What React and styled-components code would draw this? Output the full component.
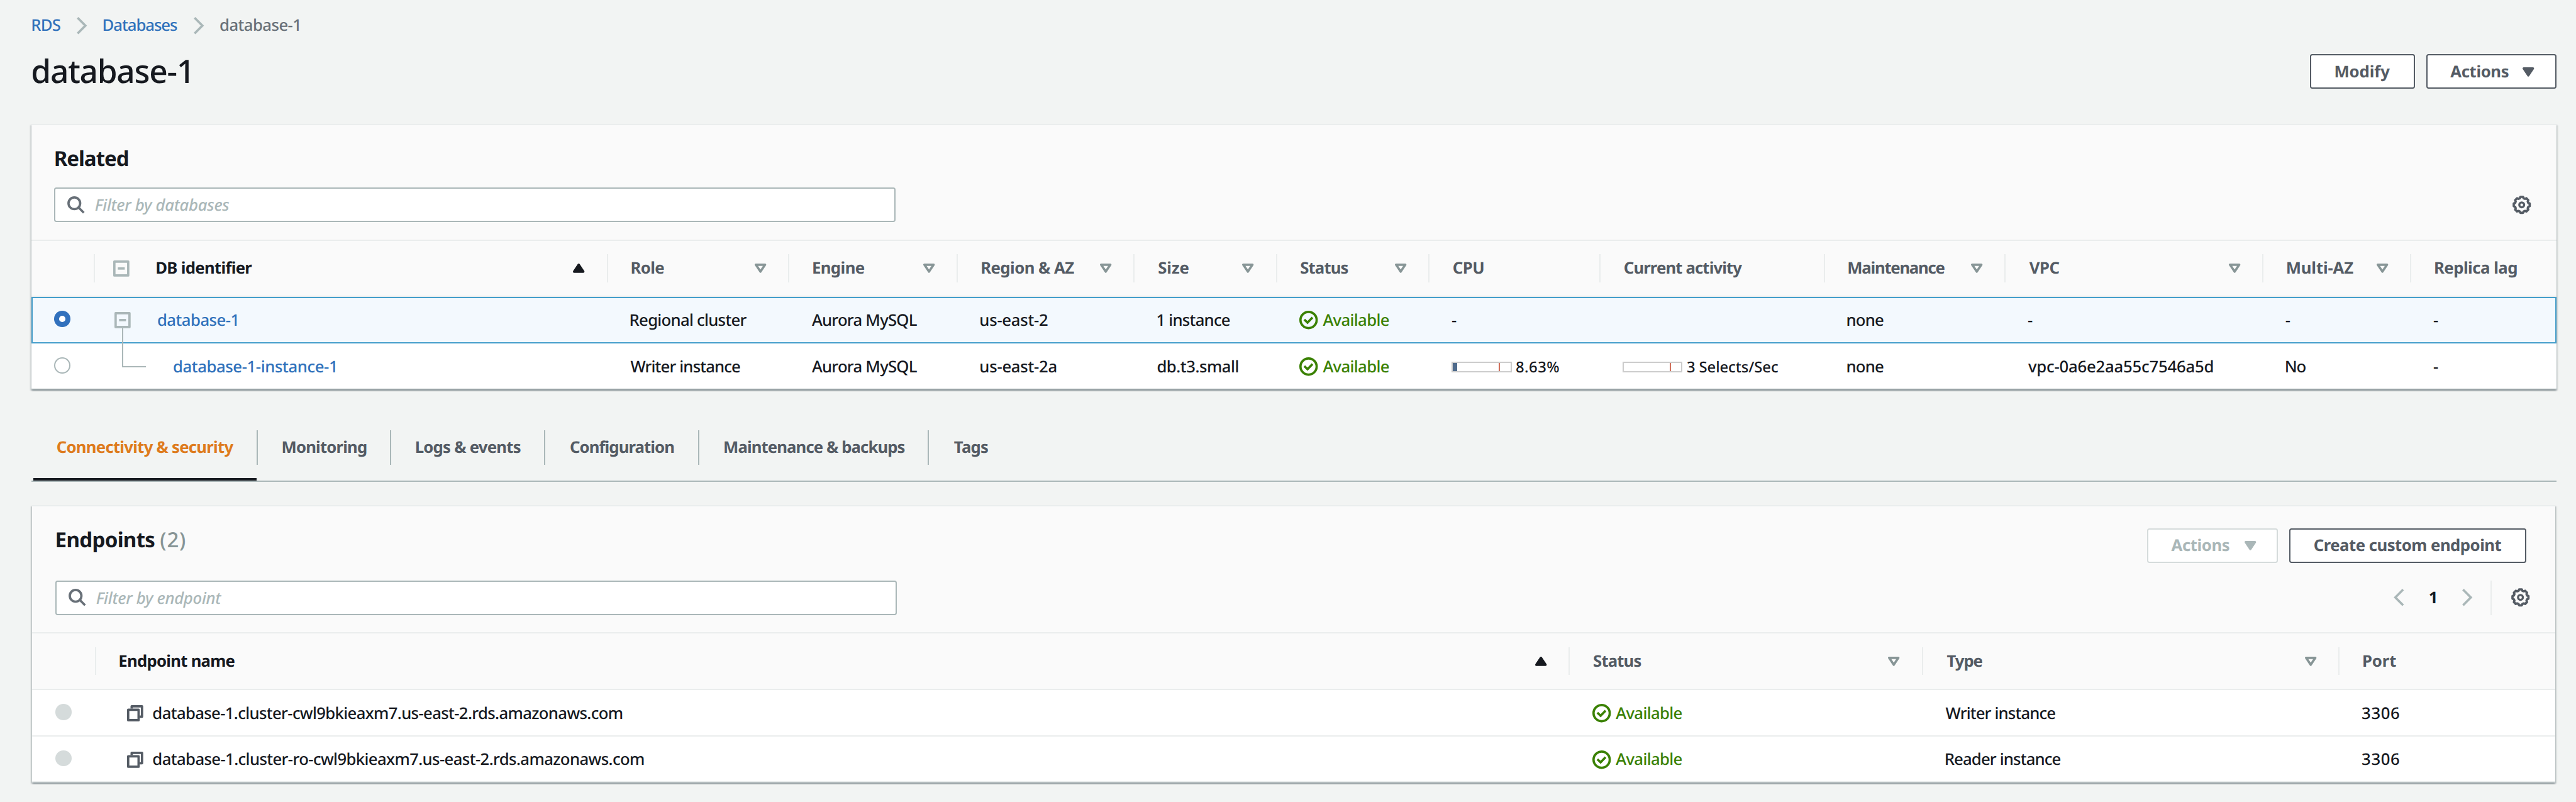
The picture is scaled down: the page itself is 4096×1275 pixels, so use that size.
import React from "react";
import styled, { createGlobalStyle, css } from "styled-components";

/* Design units are converted to CSS pixels by one scale factor. */
const SCALE = 4096 / 4458;
const s = (n) => `${(n * SCALE).toFixed(3)}px`;

const FAMILY = '"Noto Sans", "Open Sans", sans-serif';

const color = {
  page: "#f2f4f3",
  card: "#fafafa",
  line: "#eaeded",
  ink: "#16191f",
  head: "#545b64",
  muted: "#687078",
  grey: "#aab7b8",
  sort: "#879596",
  disabled: "#d5dbdb",
  link: "#2f71bb",
  green: "#3a8102",
  orange: "#de7b1c",
  selected: "#449ecb",
  selectedBg: "#f3f9fe",
};

const GlobalStyle = createGlobalStyle`
  * { box-sizing: border-box; }
  html, body { margin: 0; padding: 0; background: ${color.page}; }
  body {
    font-family: ${FAMILY};
    color: ${color.ink};
    overflow: hidden;
  }
`;

/* ---------- text ---------- */

const pen = document.createElement("canvas").getContext("2d");

function measure(text, size, weight, italic, width) {
  pen.font = `${italic ? "italic " : ""}${weight} ${size}px ${FAMILY}`;
  const m = pen.measureText(text);
  const natural = m.actualBoundingBoxLeft + m.actualBoundingBoxRight;
  return {
    track: text.length > 1 ? (width - natural) / (text.length - 1) : 0,
    indent: m.actualBoundingBoxLeft,
  };
}

const Label = styled.span`
  display: block;
  flex: none;
  width: ${(p) => s(p.$width)};
  padding-bottom: ${(p) => s(Math.max(p.$lift, 0))};
  padding-top: ${(p) => s(Math.max(-p.$lift, 0))};
  font-family: ${FAMILY};
  font-size: ${(p) => s(p.$size)};
  font-weight: ${(p) => p.$weight};
  font-style: ${(p) => (p.$italic ? "italic" : "normal")};
  line-height: 1.4;
  letter-spacing: ${(p) => s(p.$track)};
  text-align: left;
  text-indent: ${(p) => s(p.$indent)};
  text-rendering: geometricPrecision;
  white-space: nowrap;
  color: ${(p) => p.$color};
`;

function Text({ children, w, size = 28, bold, italic, tone = color.ink, lift = 0 }) {
  const weight = bold ? 700 : 460;
  const { track, indent } = measure(children, size, weight, italic, w);
  return (
    <Label
      $width={w}
      $size={size}
      $weight={weight}
      $italic={italic}
      $track={track}
      $indent={indent}
      $color={tone}
      $lift={lift}
    >
      {children}
    </Label>
  );
}

/* ---------- icons ---------- */

const Svg = styled.svg`
  display: block;
  flex: none;
  overflow: visible;
  width: ${(p) => s(p.$w)};
  height: ${(p) => s(p.$h)};
  fill: none;
  stroke: currentColor;
  stroke-width: 4;
  color: ${(p) => p.$color};
`;

const Chevron = ({ left }) => (
  <Svg $w={18} $h={30} viewBox="0 0 18 30" $color={color.grey}>
    <path d={left ? "M16.5 1.4L3 15l13.5 13.6" : "M1.5 1.4L15 15L1.5 28.6"} />
  </Svg>
);

const SearchIcon = () => (
  <Svg $w={30} $h={30} viewBox="0 0 30 30" $color={color.muted}>
    <circle cx="12.2" cy="12.2" r="10.1" />
    <path d="M19.4 19.4l9.2 9.2" />
  </Svg>
);

const gearPath = (() => {
  const points = [];
  for (let i = 0; i < 8; i += 1) {
    [[-16, 11.9], [-9.5, 14], [9.5, 14], [16, 11.9]].forEach(([offset, r]) => {
      const a = ((i * 45 + offset) * Math.PI) / 180;
      points.push(`${(16 + r * Math.sin(a)).toFixed(2)} ${(16 - r * Math.cos(a)).toFixed(2)}`);
    });
  }
  return `M${points.join("L")}Z`;
})();

const GearIcon = () => (
  <Svg $w={32} $h={32} viewBox="0 0 32 32" $color={color.head}>
    <path d={gearPath} strokeLinejoin="round" />
    <circle cx="16" cy="16" r="4.2" strokeWidth="3.6" />
  </Svg>
);

const CheckIcon = () => (
  <Svg $w={32} $h={32} viewBox="0 0 32 32" $color={color.green}>
    <circle cx="16" cy="16" r="14" />
    <path d="M8.6 15.2l5.6 5.4l8.6 -9" />
  </Svg>
);

const CopyIcon = () => (
  <Svg $w={28} $h={28} viewBox="0 0 28 28" $color={color.head} strokeLinejoin="round">
    <rect x="2" y="8" width="18" height="18" />
    <path d="M8 6V2H26V20H22" />
  </Svg>
);

const Triangle = ({ up, solid, tone }) => (
  <Svg $w={20} $h={16} viewBox="0 0 20 16" $color={tone} strokeLinejoin="round">
    <path
      d={up ? "M2 14H18L10 2Z" : "M2 2H18L10 14Z"}
      fill={solid ? "currentColor" : "none"}
    />
  </Svg>
);

const MinusBox = () => (
  <Svg $w={28} $h={28} viewBox="0 0 28 28" $color={color.grey} strokeLinejoin="round">
    <rect x="2" y="2" width="24" height="24" />
    <path d="M8 14h12" />
  </Svg>
);

/* ---------- page header ---------- */

const Page = styled.main`
  display: flex;
  flex-direction: column;
  width: 4096px;
  height: 1275px;
  padding: ${s(14)} ${s(34)} 0 ${s(54)};
  overflow: hidden;
  background: ${color.page};
`;

const Breadcrumbs = styled.nav`
  display: flex;
  align-items: center;
  gap: ${s(28)};
  height: ${s(60)};
  padding-left: ${s(1.7)};
`;

const TitleRow = styled.header`
  display: flex;
  align-items: center;
  justify-content: space-between;
  height: ${s(60)};
  margin: ${s(20)} 0 ${s(60)};
  padding-left: ${s(1.7)};
`;

const Buttons = styled.div`
  display: flex;
  gap: ${s(20)};
`;

const Button = styled.button`
  display: flex;
  align-items: center;
  justify-content: ${(p) => (p.$menu ? "space-between" : "center")};
  width: ${(p) => s(p.$width)};
  height: ${s(60)};
  padding: ${(p) => (p.$menu ? `0 ${s(36)} 0 ${s(39.5)}` : "0")};
  border: 2px solid ${(p) => (p.disabled ? color.disabled : color.head)};
  border-radius: ${s(4)};
  background: #fff;
`;

/* ---------- cards ---------- */

const Card = styled.section`
  flex: none;
  height: ${s(460)};
  margin: 0 ${(p) => s(p.$inset)};
  border-top: 2px solid ${color.line};
  background: ${color.card};
  box-shadow: 0 2px 2px 0 rgba(0, 28, 36, 0.3), 2px 2px 2px 0 rgba(0, 28, 36, 0.15),
    -2px 2px 2px 0 rgba(0, 28, 36, 0.15);
  ${(p) => p.$tall && css`height: ${s(480)};`}
`;

const Toolbar = styled.div`
  display: flex;
  flex-direction: column;
  justify-content: flex-end;
  height: ${(p) => s(p.$height)};
  padding: 0 ${s(44)} ${s(30)} ${s(40)};
`;

const CardTitle = styled.div`
  display: flex;
  align-items: center;
  gap: ${s(10)};
  height: ${(p) => s(p.$height)};
  margin-left: ${s(2.3)};
`;

const CardHeading = styled.div`
  display: flex;
  align-items: flex-start;
  justify-content: space-between;
  margin-bottom: ${(p) => s(p.$gap)};
  padding-right: ${s(6)};
`;

const FilterRow = styled.div`
  display: flex;
  align-items: center;
  justify-content: space-between;
  height: ${s(60)};
`;

const SearchBox = styled.div`
  display: flex;
  align-items: center;
  gap: ${s(19)};
  width: ${s(1456)};
  height: ${s(60)};
  padding-left: ${s(20)};
  border: 2px solid ${color.grey};
  border-radius: ${s(4)};
  background: #fff;
`;

const Pager = styled.div`
  display: flex;
  align-items: center;
  height: ${s(60)};
`;

const PageNumber = styled.div`
  padding: 0 ${s(46)} 0 ${s(44)};
`;

const PagerRule = styled.div`
  width: 2px;
  height: ${s(60)};
  margin: 0 ${s(34)} 0 ${s(31)};
  background: ${color.line};
`;

/* ---------- tables ---------- */

const Table = styled.div`
  display: flex;
  flex-direction: column;
`;

const tracks = (widths) => widths.map(s).join(" ");

const HeadRow = styled.div`
  display: grid;
  grid-template-columns: ${(p) => tracks(p.$columns)};
  height: ${s(100)};
  align-items: center;
  border-top: 2px solid ${color.line};
  border-bottom: 2px solid ${color.line};
`;

const HeadCell = styled.div`
  display: flex;
  align-items: center;
  justify-content: space-between;
  height: ${s(48)};
  padding: 0 ${s(38)} 0 ${(p) => s(p.$pad ?? 41)};
  border-right: 2px solid ${(p) => (p.$last ? "transparent" : color.line)};
`;

const Row = styled.div`
  display: grid;
  grid-template-columns: ${(p) => tracks(p.$columns)};
  align-items: center;
  height: ${s(80)};
  background: ${(p) => (p.$selected ? color.selectedBg : "#fff")};
  box-shadow: ${(p) =>
    p.$selected ? `inset 0 0 0 2px ${color.selected}` : `inset 0 -2px 0 ${color.line}`};
`;

const Cell = styled.div`
  display: flex;
  align-items: center;
  gap: ${(p) => s(p.$gap ?? 9)};
  height: 100%;
  padding-left: ${(p) => s(p.$pad ?? 39)};
`;

const TreeLabel = styled.div`
  display: flex;
  align-items: center;
  gap: ${s(47)};
`;

const Radio = styled.span`
  width: ${s(28)};
  height: ${s(28)};
  margin-bottom: ${s(4)};
  border-radius: 50%;
  border: 2px solid ${color.grey};
  background: #fff;
  ${(p) => p.$state === "on" && css`border: ${s(8.8)} solid #3171bd;`}
  ${(p) =>
    p.$state === "off" &&
    css`
      border-color: ${color.disabled};
      background: ${color.disabled};
    `}
`;

const TreeAnchor = styled.div`
  position: relative;
  height: 100%;
  width: 0;
`;

/* Connector that runs from the parent's toggle to the child row. */
const TreeBranch = styled.div`
  position: absolute;
  left: 0;
  top: ${s(-26)};
  width: ${s(41)};
  height: ${s(67)};
  border-left: 2px solid ${color.grey};
  border-bottom: 2px solid ${color.grey};
`;

const Meter = styled.div`
  display: flex;
  justify-content: space-between;
  width: ${s(104)};
  height: ${s(18)};
  margin-top: ${s(2)};
  padding-right: ${s(18)};
  border: 2px solid #cccccc;
  background: #fff;
`;

const MeterFill = styled.div`
  width: ${(p) => s(p.$value)};
  background: #4f6b8c;
`;

const MeterLimit = styled.div`
  width: 2px;
  background: #d0705c;
`;

/* ---------- tabs ---------- */

const Tabs = styled.div`
  display: flex;
  flex: none;
  height: ${s(90)};
  margin: ${s(70)} 0 ${s(40)};
  padding-left: ${s(4)};
  border-bottom: 2px solid ${color.grey};
`;

const Tab = styled.div`
  display: flex;
  align-items: flex-start;
  width: ${(p) => s(p.$width)};
  padding-left: ${(p) => s(p.$active ? 40.7 : 43)};
  border-bottom: ${(p) => (p.$active ? `4px solid ${color.ink}` : "0")};
`;

const TabText = styled.div`
  display: flex;
  align-items: center;
  height: ${s(60)};
`;

const TabRule = styled.div`
  width: 2px;
  height: ${s(60)};
  background: ${color.grey};
`;

/* ---------- data ---------- */

const widthsFrom = (edges) => edges.slice(1).map((e, i) => e - edges[i]);

const dbColumns = widthsFrom([
  54, 164, 1052, 1366, 1658, 1964, 2210, 2474, 2770, 3158, 3471, 3917, 4173, 4424,
]);
const endpointColumns = widthsFrom([56, 166, 2717, 3328, 4049, 4422]);

const dbHeads = [
  { text: "Role", w: 56.3, sort: true },
  { text: "Engine", w: 89, sort: true },
  { text: "Region & AZ", w: 160, sort: true },
  { text: "Size", w: 52.3, sort: true },
  { text: "Status", w: 82, sort: true },
  { text: "CPU", w: 52.3 },
  { text: "Current activity", w: 204 },
  { text: "Maintenance", w: 166.6, sort: true },
  { text: "VPC", w: 52.7, sort: true },
  { text: "Multi-AZ", w: 114.7, sort: true },
  { text: "Replica lag", w: 141.8, last: true },
];

const tabs = [
  { text: "Connectivity & security", w: 305.3, width: 386, active: true },
  { text: "Monitoring", w: 145, width: 228.6 },
  { text: "Logs & events", w: 181, width: 265 },
  { text: "Configuration", w: 179.5, width: 264.5 },
  { text: "Maintenance & backups", w: 312, width: 395 },
  { text: "Tags", w: 59, width: 160 },
];

const endpoints = [
  {
    name: "database-1.cluster-cwl9bkieaxm7.us-east-2.rds.amazonaws.com",
    w: 812.6,
    type: "Writer instance",
    typeWidth: 190,
  },
  {
    name: "database-1.cluster-ro-cwl9bkieaxm7.us-east-2.rds.amazonaws.com",
    w: 850,
    type: "Reader instance",
    typeWidth: 199,
  },
];

/* ---------- parts ---------- */

const Status = () => (
  <Cell $pad={38.4}>
    <CheckIcon />
    <Text w={114.4} tone={color.green}>Available</Text>
  </Cell>
);

const Value = ({ children, w }) => (
  <Cell>
    <Text w={w}>{children}</Text>
  </Cell>
);

const Dash = () => <Value w={9}>-</Value>;

const Head = ({ text, w, sort, last }) => (
  <HeadCell $last={last}>
    <Text bold w={w} tone={color.head}>{text}</Text>
    {sort && <Triangle tone={color.sort} />}
  </HeadCell>
);

const Filter = ({ placeholder, w }) => (
  <SearchBox>
    <SearchIcon />
    <Text italic w={w} lift={-1} tone={color.grey}>{placeholder}</Text>
  </SearchBox>
);

function RelatedCard() {
  return (
    <Card $inset={0}>
      <Toolbar $height={198}>
        <CardHeading $gap={26}>
          <CardTitle $height={50}>
            <Text bold size={36} w={125.7} lift={-2}>Related</Text>
          </CardTitle>
        </CardHeading>
        <FilterRow>
          <Filter placeholder="Filter by databases" w={231.5} />
          <GearIcon />
        </FilterRow>
      </Toolbar>
      <Table>
        <HeadRow $columns={dbColumns}>
          <HeadCell />
          <HeadCell $pad={32}>
            <TreeLabel>
              <MinusBox />
              <Text bold w={165.8}>DB identifier</Text>
            </TreeLabel>
            <Triangle up solid tone={color.ink} />
          </HeadCell>
          {dbHeads.map((h) => (
            <Head key={h.text} {...h} />
          ))}
        </HeadRow>
        <Row $columns={dbColumns} $selected>
          <Cell $pad={40}><Radio $state="on" /></Cell>
          <Cell $pad={34} $gap={47}>
            <MinusBox />
            <Text w={137} tone={color.link}>database-1</Text>
          </Cell>
          <Value w={201.6}>Regional cluster</Value>
          <Value w={182.5}>Aurora MySQL</Value>
          <Value w={116}>us-east-2</Value>
          <Value w={125.5}>1 instance</Value>
          <Status />
          <Dash />
          <Cell />
          <Value w={62.5}>none</Value>
          <Dash />
          <Dash />
          <Dash />
        </Row>
        <Row $columns={dbColumns}>
          <Cell $pad={40}><Radio /></Cell>
          <Cell $pad={47} $gap={89.2}>
            <TreeAnchor><TreeBranch /></TreeAnchor>
            <Text w={280} tone={color.link}>database-1-instance-1</Text>
          </Cell>
          <Value w={190}>Writer instance</Value>
          <Value w={182.5}>Aurora MySQL</Value>
          <Value w={130.8}>us-east-2a</Value>
          <Value w={140}>db.t3.small</Value>
          <Status />
          <Cell $pad={38} $gap={8}>
            <Meter><MeterFill $value={8} /><MeterLimit /></Meter>
            <Text size={26} w={74.8}>8.63%</Text>
          </Cell>
          <Cell $pad={38} $gap={8}>
            <Meter><MeterFill $value={0} /><MeterLimit /></Meter>
            <Text size={26} w={157}>3 Selects/Sec</Text>
          </Cell>
          <Value w={62.5}>none</Value>
          <Value w={320.5}>vpc-0a6e2aa55c7546a5d</Value>
          <Value w={34.2}>No</Value>
          <Dash />
        </Row>
      </Table>
    </Card>
  );
}

function EndpointsCard() {
  return (
    <Card $inset={2} $tall>
      <Toolbar $height={218}>
        <CardHeading $gap={30}>
          <CardTitle $height={38}>
            <Text bold size={36} w={169.5} lift={-2}>Endpoints</Text>
            <Text size={36} w={42.5} lift={-2} tone={color.sort}>(2)</Text>
          </CardTitle>
          <Buttons>
            <Button $width={226} $menu disabled>
              <Text bold w={100.3} tone={color.grey}>Actions</Text>
              <Triangle solid tone={color.grey} />
            </Button>
            <Button $width={410}>
              <Text bold w={324.4} tone={color.head}>Create custom endpoint</Text>
            </Button>
          </Buttons>
        </CardHeading>
        <FilterRow>
          <Filter placeholder="Filter by endpoint" w={216.5} />
          <Pager>
            <Chevron left />
            <PageNumber><Text bold w={10.8}>1</Text></PageNumber>
            <Chevron />
            <PagerRule />
            <GearIcon />
          </Pager>
        </FilterRow>
      </Toolbar>
      <Table>
        <HeadRow $columns={endpointColumns}>
          <HeadCell />
          <HeadCell>
            <Text bold w={199.4}>Endpoint name</Text>
            <Triangle up solid tone={color.ink} />
          </HeadCell>
          <Head text="Status" w={82} sort />
          <Head text="Type" w={62} sort />
          <Head text="Port" w={57} last />
        </HeadRow>
        {endpoints.map((e) => (
          <Row key={e.name} $columns={endpointColumns}>
            <Cell $pad={40}><Radio $state="off" /></Cell>
            <Cell $pad={54} $gap={16.8}>
              <CopyIcon />
              <Text w={e.w}>{e.name}</Text>
            </Cell>
            <Status />
            <Value w={e.typeWidth}>{e.type}</Value>
            <Value w={64}>3306</Value>
          </Row>
        ))}
      </Table>
    </Card>
  );
}

export default function App() {
  return (
    <>
      <GlobalStyle />
      <Page>
        <Breadcrumbs>
          <Text w={49.3} tone={color.link}>RDS</Text>
          <Chevron />
          <Text w={128} tone={color.link}>Databases</Text>
          <Chevron />
          <Text w={136.5} tone={color.muted}>database-1</Text>
        </Breadcrumbs>
        <TitleRow>
          <Text size={56} w={271} lift={1.5}>database-1</Text>
          <Buttons>
            <Button $width={181}>
              <Text bold w={94.3} tone={color.head}>Modify</Text>
            </Button>
            <Button $width={225} $menu>
              <Text bold w={100.5} tone={color.head}>Actions</Text>
              <Triangle solid tone={color.head} />
            </Button>
          </Buttons>
        </TitleRow>
        <RelatedCard />
        <Tabs>
          {tabs.map((t, i) => (
            <React.Fragment key={t.text}>
              <Tab $width={t.width} $active={t.active}>
                <TabText>
                  <Text bold w={t.w} tone={t.active ? color.orange : color.head}>{t.text}</Text>
                </TabText>
              </Tab>
              {i < tabs.length - 1 && <TabRule />}
            </React.Fragment>
          ))}
        </Tabs>
        <EndpointsCard />
      </Page>
    </>
  );
}
